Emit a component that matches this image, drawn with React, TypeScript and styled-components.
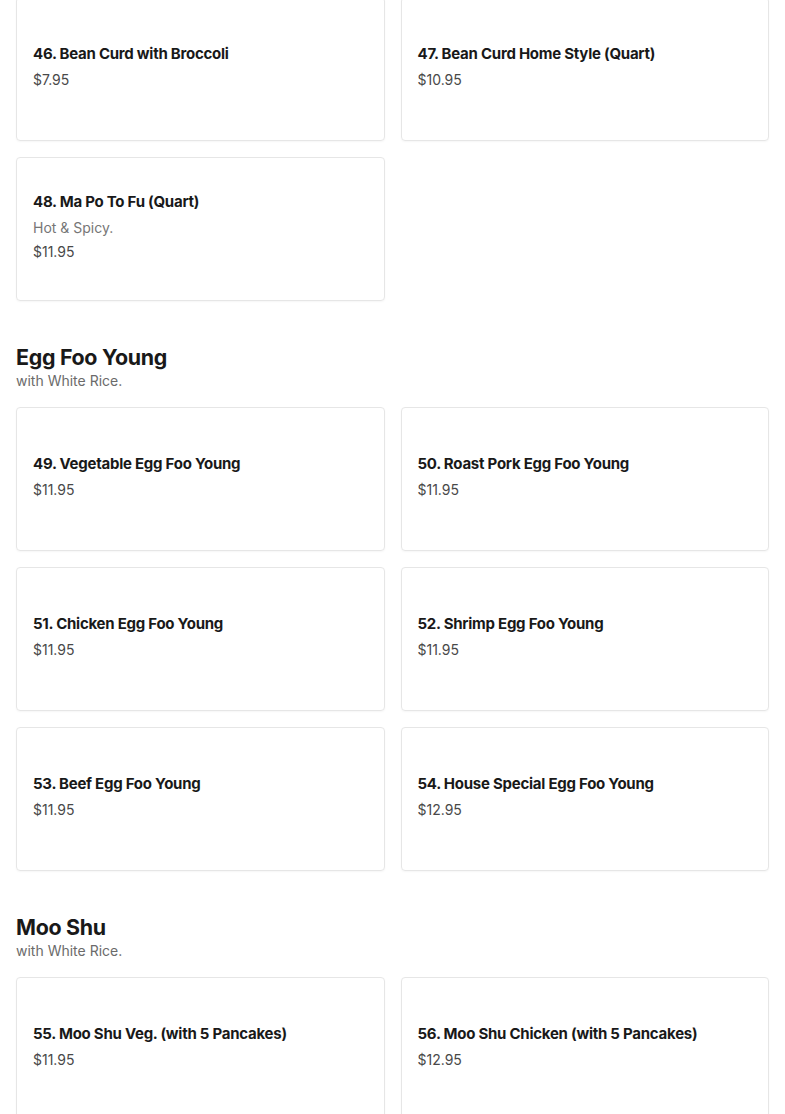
import styled, { createGlobalStyle } from 'styled-components';

const GlobalStyle = createGlobalStyle`
  body {
    margin: 0;
    background: #fff;
    font-family: Inter, 'Noto Sans', sans-serif;
    color: #191919;
  }
`;

const Page = styled.main`
  padding: 0 16px;
  margin-top: -3px;
`;

const Section = styled.section`
  & + & {
    margin-top: 42px;
  }
`;

const Heading = styled.h2`
  margin: 0;
  font-size: 21.4px;
  line-height: 28px;
  font-weight: 700;
  letter-spacing: -0.3px;
`;

const Subtitle = styled.p`
  margin: 0 0 16px;
  font-size: 14px;
  line-height: 20px;
  color: #6b6b6b;
`;

const Grid = styled.div`
  display: grid;
  grid-template-columns: 1fr 1fr;
  gap: 16px;
`;

const Card = styled.div`
  box-sizing: border-box;
  min-height: 144px;
  padding: 16px 16px 22px;
  border: 1px solid #e6e6e6;
  border-radius: 4px;
  box-shadow: 0 1px 2px rgba(0, 0, 0, 0.04);
  display: flex;
  flex-direction: column;
  justify-content: center;
`;

const Title = styled.div`
  font-size: 15px;
  line-height: 24px;
  font-weight: 700;
  letter-spacing: -0.25px;
  margin-bottom: 4px;
`;

const Desc = styled.div`
  font-size: 14px;
  line-height: 20px;
  color: #767676;
  margin-bottom: 4px;
`;

const Price = styled.div`
  font-size: 14px;
  line-height: 20px;
  color: #494949;
`;

type Item = { name: string; price: string; desc?: string };
type Group = { title?: string; sub?: string; items: Item[] };

const groups: Group[] = [
  {
    items: [
      { name: '46. Bean Curd with Broccoli', price: '$7.95' },
      { name: '47. Bean Curd Home Style (Quart)', price: '$10.95' },
      { name: '48. Ma Po To Fu (Quart)', desc: 'Hot & Spicy.', price: '$11.95' },
    ],
  },
  {
    title: 'Egg Foo Young',
    sub: 'with White Rice.',
    items: [
      { name: '49. Vegetable Egg Foo Young', price: '$11.95' },
      { name: '50. Roast Pork Egg Foo Young', price: '$11.95' },
      { name: '51. Chicken Egg Foo Young', price: '$11.95' },
      { name: '52. Shrimp Egg Foo Young', price: '$11.95' },
      { name: '53. Beef Egg Foo Young', price: '$11.95' },
      { name: '54. House Special Egg Foo Young', price: '$12.95' },
    ],
  },
  {
    title: 'Moo Shu',
    sub: 'with White Rice.',
    items: [
      { name: '55. Moo Shu Veg. (with 5 Pancakes)', price: '$11.95' },
      { name: '56. Moo Shu Chicken (with 5 Pancakes)', price: '$12.95' },
    ],
  },
];

export default function App() {
  return (
    <>
      <GlobalStyle />
      <Page>
        {groups.map((g, i) => (
          <Section key={i}>
            {g.title && <Heading>{g.title}</Heading>}
            {g.sub && <Subtitle>{g.sub}</Subtitle>}
            <Grid>
              {g.items.map((it) => (
                <Card key={it.name}>
                  <Title>{it.name}</Title>
                  {it.desc && <Desc>{it.desc}</Desc>}
                  <Price>{it.price}</Price>
                </Card>
              ))}
            </Grid>
          </Section>
        ))}
      </Page>
    </>
  );
}
